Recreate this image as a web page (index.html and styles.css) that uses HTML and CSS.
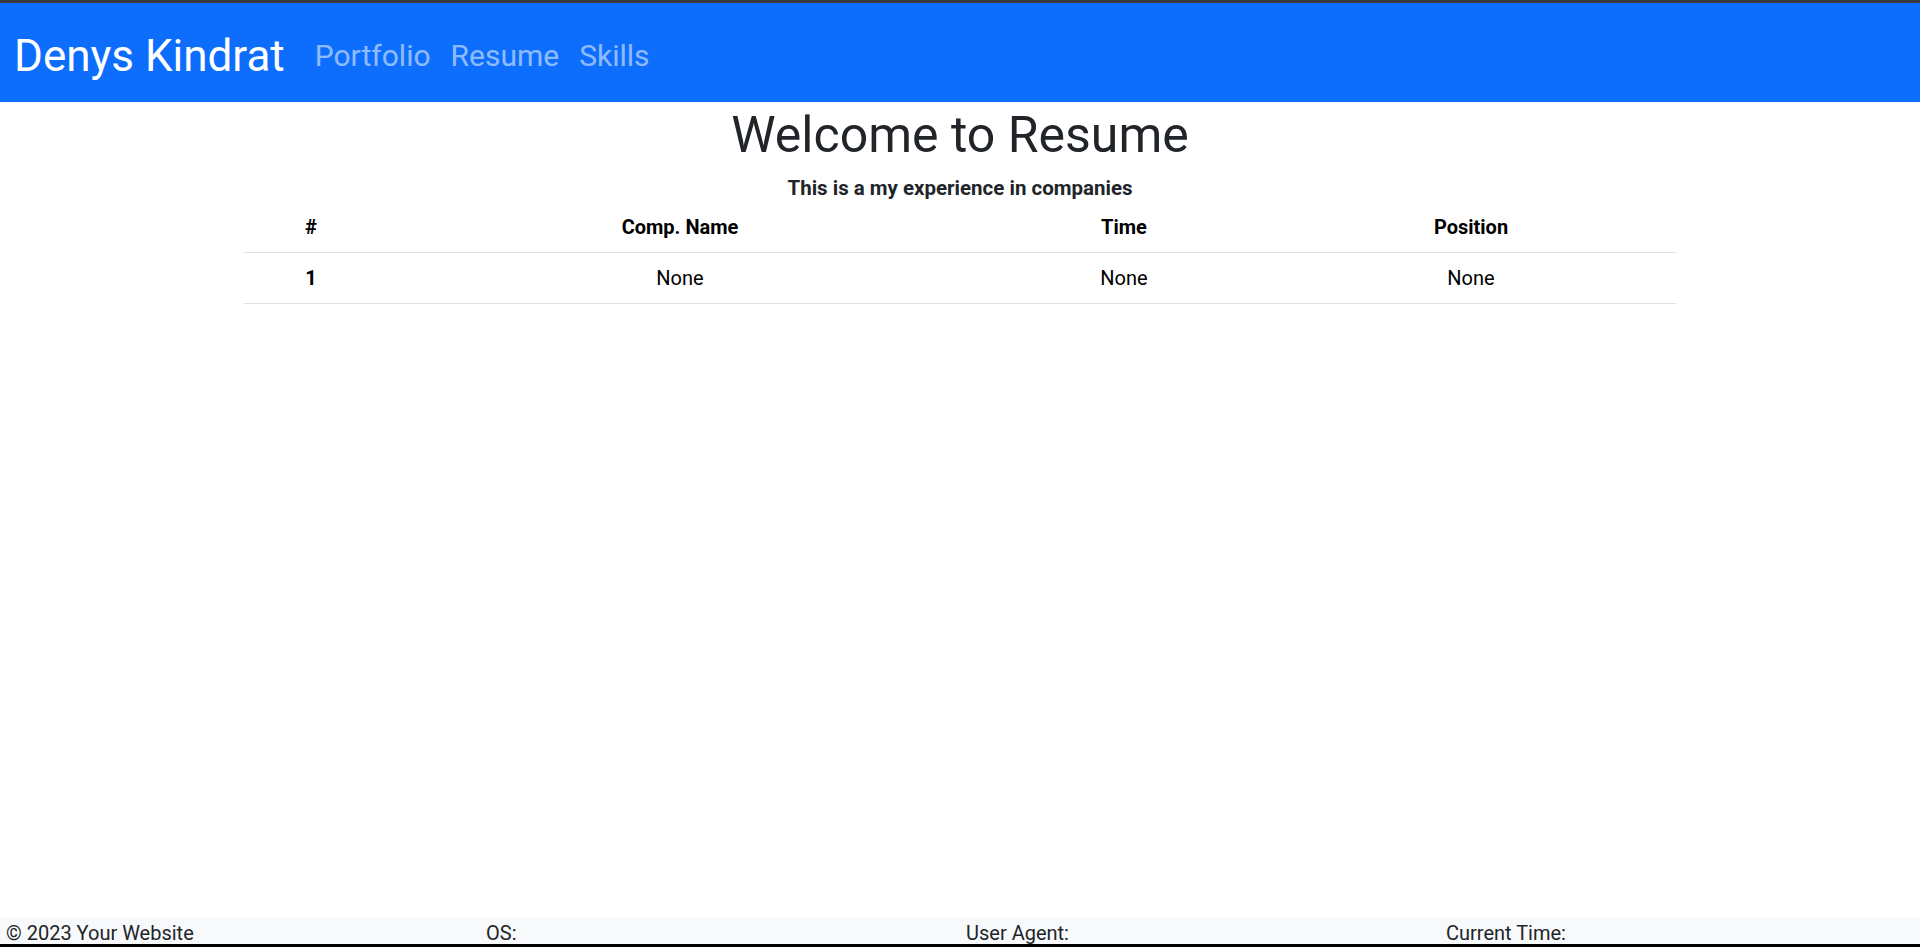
FILE: index.html
```html
<!DOCTYPE html>
<html lang="en">
<head>
<meta charset="utf-8">
<title>Resume</title>
<link rel="stylesheet" href="styles.css">
</head>
<body>
<div class="page">
  <div class="frame-top"></div>
  <nav class="navbar">
    <a class="brand" href="#">Denys Kindrat</a>
    <ul class="nav">
      <li><a class="nav-link" href="#">Portfolio</a></li>
      <li><a class="nav-link" href="#">Resume</a></li>
      <li><a class="nav-link" href="#">Skills</a></li>
    </ul>
  </nav>
  <main class="main">
    <h1 class="title">Welcome to Resume</h1>
    <h6 class="subtitle">This is a my experience in companies</h6>
    <table class="table">
      <colgroup>
        <col class="c1"><col class="c2"><col class="c3"><col class="c4">
      </colgroup>
      <thead>
        <tr><th>#</th><th>Comp. Name</th><th>Time</th><th>Position</th></tr>
      </thead>
      <tbody>
        <tr><th>1</th><td>None</td><td>None</td><td>None</td></tr>
      </tbody>
    </table>
  </main>
  <footer class="footer">
    <div class="fcol">© 2023 Your Website</div>
    <div class="fcol">OS: </div>
    <div class="fcol">User Agent: </div>
    <div class="fcol">Current Time: </div>
  </footer>
  <div class="frame-bottom"></div>
</div>
</body>
</html>
```
FILE: styles.css
```css
* { box-sizing: border-box; }
html, body { margin: 0; padding: 0; }
body {
  font-family: Roboto, "Liberation Sans", sans-serif;
  color: #212529;
  background: #fff;
}
.page {
  height: 947px;
  display: flex;
  flex-direction: column;
  overflow: hidden;
}
.frame-top { height: 3px; background: #3a3a3a; flex: none; }
.frame-bottom { height: 3px; background: #000; flex: none; }

.navbar {
  flex: none;
  height: 99px;
  background: #0d6efd;
  display: flex;
  align-items: center;
  padding: 6px 14px 0;
}
.brand {
  color: #fff;
  text-decoration: none;
  font-size: 44px;
  margin-right: 20px;
  white-space: nowrap;
}
.nav {
  list-style: none;
  margin: 0;
  padding: 0;
  display: flex;
}
.nav-link {
  display: block;
  padding: 0 10px;
  font-size: 30px;
  color: rgba(255, 255, 255, 0.55);
  text-decoration: none;
}

.main { flex: 1; }
.title {
  margin: 3px 0 11px;
  font-size: 50px;
  line-height: 1.2;
  font-weight: 400;
  text-align: center;
  color: #212529;
}
.subtitle {
  margin: 0 0 2px;
  font-size: 20.5px;
  line-height: 24px;
  font-weight: 700;
  text-align: center;
  color: #212529;
}
.table {
  width: 1432px;
  margin: 0 auto;
  border-collapse: collapse;
  table-layout: fixed;
  font-size: 20px;
  line-height: 30px;
  color: #000;
}
.c1 { width: 134px; }
.c2 { width: 604px; }
.c3 { width: 284px; }
.c4 { width: 410px; }
.table th, .table td {
  padding: 10px 10px;
  text-align: center;
  border-bottom: 1px solid #dee2e6;
}
.table th { font-weight: 700; }
.table td { font-weight: 400; }

.footer {
  flex: none;
  height: 27px;
  overflow: hidden;
  background: #f8f9fa;
  display: grid;
  grid-template-columns: repeat(4, 1fr);
  font-size: 20px;
  line-height: 30px;
  padding-top: 1px;
}
.fcol { padding-left: 6px; white-space: nowrap; }
```
